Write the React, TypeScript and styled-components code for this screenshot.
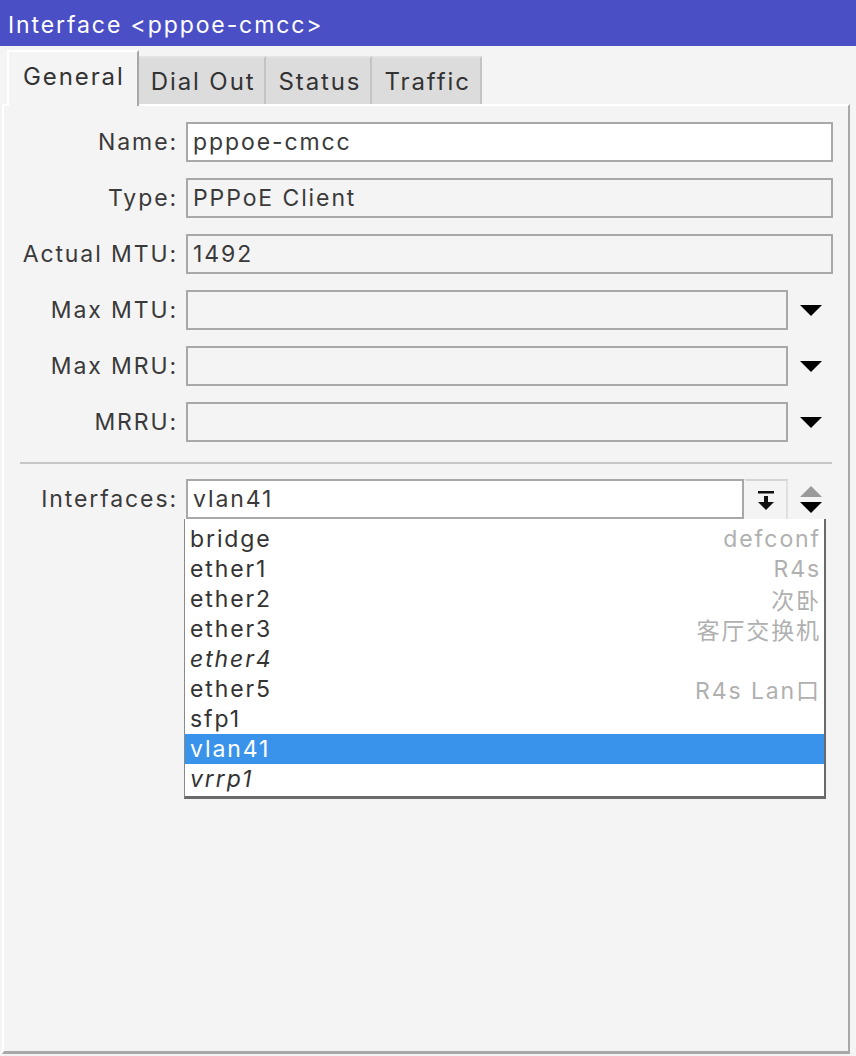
import React from "react";
import styled, { createGlobalStyle } from "styled-components";

const GlobalStyle = createGlobalStyle`
  html, body {
    margin: 0;
    padding: 0;
    background: #f4f4f4;
  }
  body {
    font-family: Inter, "Noto Sans CJK SC", sans-serif;
    color: #333;
    letter-spacing: 1.9px;
  }
`;

const tabs = ["General", "Dial Out", "Status", "Traffic"];

const fields = [
  { label: "Name:", value: "pppoe-cmcc", editable: true, arrow: false },
  { label: "Type:", value: "PPPoE Client", editable: false, arrow: false },
  { label: "Actual MTU:", value: "1492", editable: false, arrow: false },
  { label: "Max MTU:", value: "", editable: false, arrow: true },
  { label: "Max MRU:", value: "", editable: false, arrow: true },
  { label: "MRRU:", value: "", editable: false, arrow: true },
];

const options = [
  { name: "bridge", comment: "defconf" },
  { name: "ether1", comment: "R4s" },
  { name: "ether2", comment: "次卧" },
  { name: "ether3", comment: "客厅交换机" },
  { name: "ether4", comment: "", disabled: true },
  { name: "ether5", comment: "R4s Lan口" },
  { name: "sfp1", comment: "" },
  { name: "vlan41", comment: "", selected: true },
  { name: "vrrp1", comment: "", disabled: true },
];

export default function App() {
  return (
    <Window>
      <GlobalStyle />
      <TitleBar>Interface &lt;pppoe-cmcc&gt;</TitleBar>
      <TabBar>
        {tabs.map((t, i) => (
          <Tab key={t} $active={i === 0}>
            {t}
          </Tab>
        ))}
      </TabBar>
      <Panel>
        <FormGrid>
          {fields.map((f) => (
            <React.Fragment key={f.label}>
              <Label>{f.label}</Label>
              <Input $editable={f.editable} $wide={!f.arrow}>
                {f.value}
              </Input>
              {f.arrow && (
                <ArrowCell>
                  <DownTriangle />
                </ArrowCell>
              )}
            </React.Fragment>
          ))}
        </FormGrid>
        <Separator />
        <FormGrid>
          <Label>Interfaces:</Label>
          <ComboWrap>
            <Input $editable $wide={false}>
              vlan41
            </Input>
            <ComboButton>
              <svg width="18" height="24" viewBox="0 0 18 24">
                <rect x="1" y="3" width="16" height="2.5" fill="#111" />
                <rect x="7" y="8" width="4" height="7" fill="#111" />
                <polygon points="1,14 17,14 9,22" fill="#111" />
              </svg>
            </ComboButton>
            <DropList>
              {options.map((o) => (
                <Option key={o.name} $selected={!!o.selected}>
                  <OptionName $italic={!!o.disabled}>{o.name}</OptionName>
                  <OptionComment>{o.comment}</OptionComment>
                </Option>
              ))}
            </DropList>
          </ComboWrap>
          <ArrowCell>
            <Stepper>
              <UpTriangle />
              <DownTriangle />
            </Stepper>
          </ArrowCell>
        </FormGrid>
      </Panel>
    </Window>
  );
}

const Window = styled.div`
  width: 856px;
  height: 1056px;
  display: flex;
  flex-direction: column;
  background: #f4f4f4;
  box-sizing: border-box;
`;

const TitleBar = styled.div`
  height: 46px;
  background: #4b4fc6;
  color: #fff;
  font-size: 23px;
  line-height: 50px;
  padding-left: 8px;
  white-space: nowrap;
`;

const TabBar = styled.div`
  height: 58px;
  display: flex;
  align-items: flex-end;
  padding-left: 7px;
  position: relative;
  z-index: 1;
`;

const Tab = styled.div<{ $active: boolean }>`
  box-sizing: border-box;
  height: ${(p) => (p.$active ? "56px" : "48px")};
  margin-bottom: ${(p) => (p.$active ? "-2px" : "0")};
  padding: ${(p) => (p.$active ? "0 12px 0 14px" : "0 9px 0 10px")};
  background: ${(p) => (p.$active ? "#f4f4f4" : "#dcdcdc")};
  border-top: 2px solid ${(p) => (p.$active ? "#fff" : "#e4e4e4")};
  border-left: 2px solid ${(p) => (p.$active ? "#fff" : "#dcdcdc")};
  border-right: 2px solid ${(p) => (p.$active ? "#a8a8a8" : "#c4c4c4")};
  font-size: 24px;
  line-height: ${(p) => (p.$active ? "50px" : "48px")};
  color: #333;
`;

const Panel = styled.div`
  flex: 1;
  margin: 0 6px 2px 2px;
  border-top: 2px solid #fff;
  border-left: 2px solid #fff;
  border-right: 2px solid #a8a8a8;
  border-bottom: 3px solid #a8a8a8;
  padding: 16px 15px 0 0;
`;

const FormGrid = styled.div`
  display: grid;
  grid-template-columns: 182px 1fr 45px;
  grid-auto-rows: 40px;
  row-gap: 16px;
`;

const Label = styled.div`
  font-size: 23px;
  text-align: right;
  padding-right: 8px;
  line-height: 40px;
  color: #3a3a3a;
  white-space: nowrap;
`;

const Input = styled.div<{ $editable: boolean; $wide: boolean }>`
  box-sizing: border-box;
  grid-column: ${(p) => (p.$wide ? "2 / 4" : "auto")};
  height: 40px;
  border: 2px solid #a8a8a8;
  background: ${(p) => (p.$editable ? "#fff" : "#f4f4f4")};
  font-size: 23px;
  line-height: 36px;
  padding-left: 5px;
  color: #3a3a3a;
  flex: 1;
  white-space: nowrap;
`;

const ArrowCell = styled.div`
  display: flex;
  align-items: center;
  justify-content: center;
`;

const DownTriangle = styled.div`
  width: 0;
  height: 0;
  border-left: 11px solid transparent;
  border-right: 11px solid transparent;
  border-top: 11px solid #000;
`;

const UpTriangle = styled.div`
  width: 0;
  height: 0;
  border-left: 11px solid transparent;
  border-right: 11px solid transparent;
  border-bottom: 11px solid #9a9a9a;
`;

const Stepper = styled.div`
  display: flex;
  flex-direction: column;
  gap: 5px;
  align-items: center;
`;

const Separator = styled.div`
  height: 2px;
  background: #c6c6c6;
  margin: 20px 1px 15px 16px;
`;

const ComboWrap = styled.div`
  display: flex;
  position: relative;
`;

const ComboButton = styled.div`
  box-sizing: border-box;
  width: 44px;
  height: 40px;
  border-top: 2px solid #d4d4d4;
  border-right: 2px solid #e0e0e0;
  border-left: 2px solid #f4f4f4;
  display: flex;
  align-items: center;
  justify-content: center;
`;

const DropList = styled.div`
  position: absolute;
  top: 40px;
  left: -2px;
  width: 642px;
  box-sizing: border-box;
  background: #fff;
  border-left: 1px solid #8a8a8a;
  border-right: 2px solid #6a6a6a;
  border-bottom: 3px solid #6a6a6a;
  padding: 5px 0 2px;
  z-index: 2;
`;

const Option = styled.div<{ $selected: boolean }>`
  height: 30px;
  display: flex;
  justify-content: space-between;
  align-items: center;
  padding: 0 3px 0 5px;
  font-size: 23px;
  background: ${(p) => (p.$selected ? "#3a93ea" : "transparent")};
  color: ${(p) => (p.$selected ? "#fff" : "#333")};
  white-space: nowrap;
`;

const OptionName = styled.span<{ $italic: boolean }>`
  font-style: ${(p) => (p.$italic ? "italic" : "normal")};
`;

const OptionComment = styled.span`
  color: #b0b0b0;
`;
